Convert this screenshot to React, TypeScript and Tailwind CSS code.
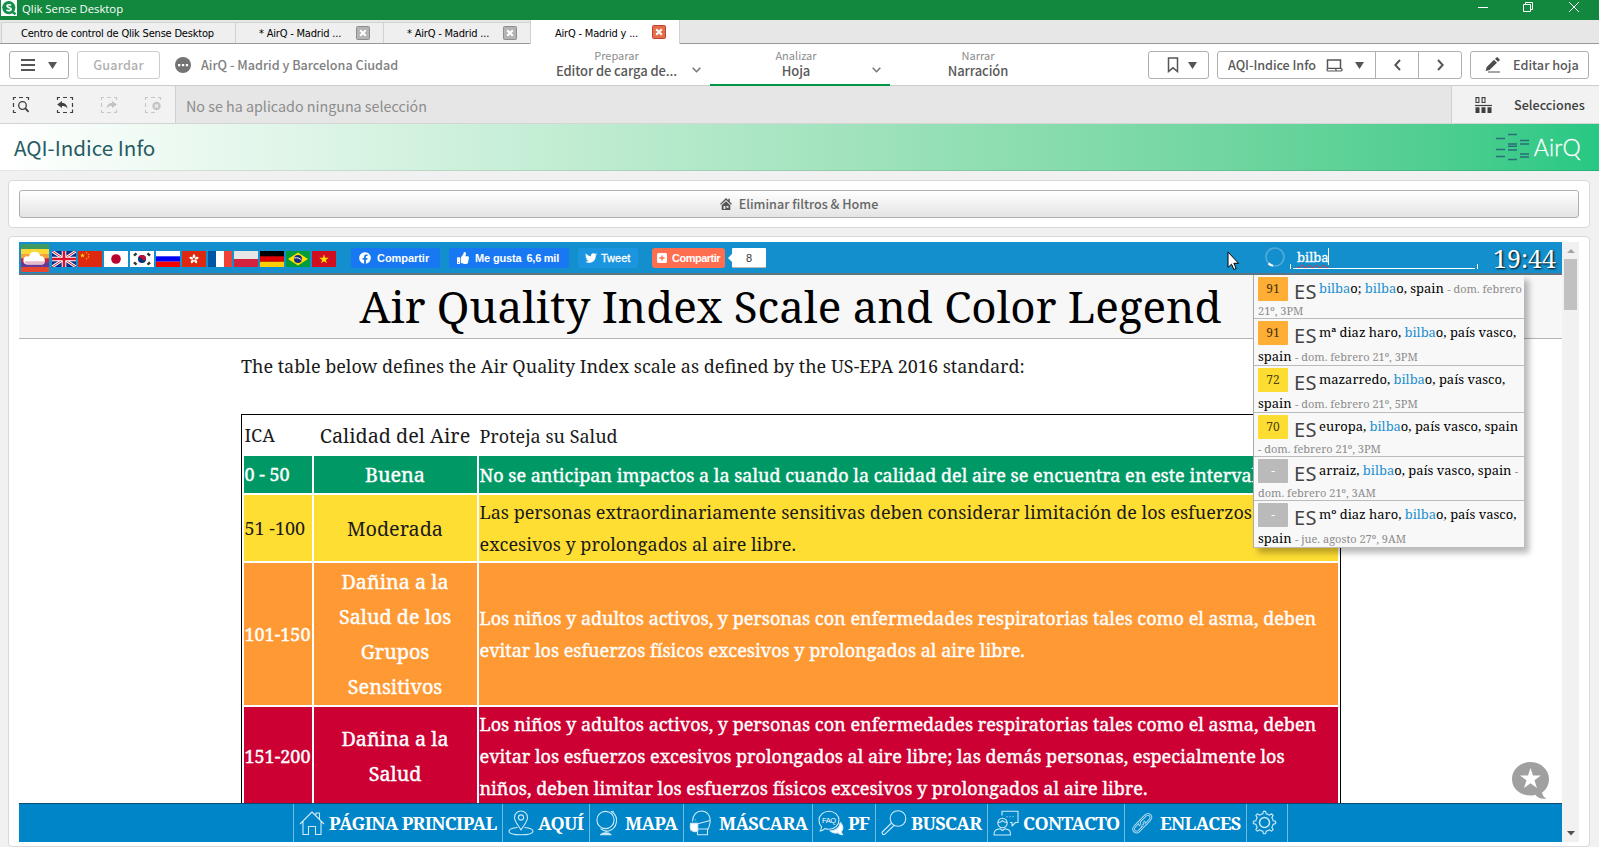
import React from "react";
import { FaFacebook, FaThumbsUp, FaTwitter } from "react-icons/fa";

const SANS = "font-['Noto_Sans_CJK_SC','Noto_Sans',sans-serif]";
const SERIF = "font-['Noto_Serif','DejaVu_Serif',serif]";
const UI = "font-['DejaVu_Sans_Condensed','Noto_Sans',sans-serif]";

/* ---------- window chrome ---------- */

function TitleBar() {
  return (
    <div className="flex h-[20px] items-start bg-[#11883e] pl-[1px]">
      <svg width="16" height="16" viewBox="0 0 16 16" className="shrink-0">
        <rect width="16" height="16" fill="#fff" />
        <circle cx="7.8" cy="7.6" r="6.6" fill="#12904a" />
        <path d="M11 11.5l3.5 2.8" stroke="#12904a" strokeWidth="2.4" />
        <path d="M10 5.4C9.3 4.6 6 4.3 6 6.1c0 1.9 4.1 1 4.1 3 0 2-3.600 1.800-4.500.600" fill="none" stroke="#fff" strokeWidth="1.700" />
      </svg>
      <span className="ml-[5px] font-['Open_Sans','Noto_Sans',sans-serif] text-[11.300px] leading-[18px] text-white">Qlik Sense Desktop</span>
      <svg width="112" height="14" viewBox="0 0 112 14" className="ml-auto mr-[10px]" fill="none" stroke="#fff" strokeWidth="1">
        <path d="M1 7.500h10" />
        <path d="M46.500 4.500h7v7h-7zM48.500 4.500v-2h7v7h-2" />
        <path d="M92 2l10 10M102 2l-10 10" />
      </svg>
    </div>
  );
}

function CloseBox({ active }: { active?: boolean }) {
  return (
    <svg width="14" height="14" viewBox="0 0 14 14" className={`absolute right-[13px] ${active ? "top-[5px]" : "top-[3px]"}`}>
      <rect x=".500" y=".500" width="13" height="13" rx="1" fill={active ? "#e0704e" : "#b4b4b4"} stroke={active ? "#c9402a" : "#8e8e8e"} />
      <path d="M4.200 4.200l5.600 5.600M9.800 4.200l-5.600 5.600" stroke="#fff" strokeWidth="2" />
    </svg>
  );
}

function WindowTabs() {
  return (
    <div className={`${UI} flex h-[24px] items-end border-b border-[#999] bg-[#e7e7e7] pl-[1px] text-[11px] tracking-[-0.200px] text-black`}>
      <div className="h-[21px] w-[234px] border-l border-t border-[#d2d2d2] bg-[#efefef] pl-[19px] leading-[22px]">Centro de control de Qlik Sense Desktop</div>
      <div className="relative h-[21px] w-[148px] border-l border-t border-[#d2d2d2] bg-[#efefef] pl-[23px] leading-[22px]">* AirQ - Madrid ...<CloseBox /></div>
      <div className="relative h-[21px] w-[147px] border-l border-t border-[#d2d2d2] bg-[#efefef] pl-[23px] leading-[22px]">* AirQ - Madrid ...<CloseBox /></div>
      <div className="relative -mb-px h-[24px] w-[150px] border-l border-r border-[#d2d2d2] bg-white pl-[24px] leading-[27px]">AirQ - Madrid y ...<CloseBox active /></div>
    </div>
  );
}

/* ---------- Qlik toolbar ---------- */

function Caret() {
  return <svg width="9" height="7" viewBox="0 0 9 7"><path d="M0 0h9L4.500 7z" fill="#555" /></svg>;
}

function Chevron() {
  return <svg width="9" height="6" viewBox="0 0 9 6" className="absolute right-[9px] top-[23px]" fill="none" stroke="#777" strokeWidth="1.600"><path d="M.700.700l3.800 4 3.800-4" /></svg>;
}

function NavTab({ top, label, pad, active, arrow }: { top: string; label: string; pad: string; active?: boolean; arrow?: boolean }) {
  return (
    <div className={`relative flex h-[42px] w-[180px] flex-col items-center ${pad} ${active ? "border-b-2 border-[#009845]" : ""}`}>
      <span className="mt-[3px] text-[11px] font-normal leading-[16px] text-[#8c8c8c]">{top}</span>
      <span className="text-[13px] font-medium leading-[16px] tracking-[-0.100px] text-[#595959]">{label}</span>
      {arrow && <Chevron />}
    </div>
  );
}

function Toolbar() {
  const btn = "flex h-[28px] items-center rounded-[3px] border border-[#b0b0b0] bg-white";
  return (
    <div className={`${SANS} flex h-[42px] items-start border-b border-[#ccc] bg-white text-[12.600px] font-medium text-[#595959]`}>
      <div className="flex w-[530px] shrink-0 items-center pl-[9px] pt-[7px]">
        <div className={`${btn} w-[60px] gap-[13px] pl-[11px]`}>
          <svg width="14" height="12" viewBox="0 0 14 12"><path d="M0 1h14M0 6h14M0 11h14" stroke="#555" strokeWidth="2" /></svg>
          <Caret />
        </div>
        <div className={`${btn} ml-[8px] w-[83px] justify-center border-[#ccc] tracking-[0.200px] text-[#b0b0b0]`}>Guardar</div>
        <svg width="16" height="16" viewBox="0 0 16 16" className="ml-[15px]"><circle cx="8" cy="8" r="8" fill="#737373" /><path d="M3 7h2.300v2.300H3zM6.900 7h2.300v2.300H6.900zM10.800 7h2.300v2.300h-2.300z" fill="#fff" /></svg>
        <span className="ml-[10px] text-[12.600px] text-[#808080]">AirQ - Madrid y Barcelona Ciudad</span>
      </div>
      <NavTab top="Preparar" label="Editor de carga de..." pad="pr-[7px]" arrow />
      <NavTab top="Analizar" label="Hoja" pad="pr-[8px]" active arrow />
      <NavTab top="Narrar" label="Narración" pad="pr-[4px]" />
      <div className="ml-auto flex pr-[10px] pt-[7px]">
        <div className={`${btn} w-[61px] gap-[9px] pl-[18px]`}>
          <svg width="12" height="16" viewBox="0 0 12 16" fill="none" stroke="#555" strokeWidth="1.500"><path d="M1.500 1h9v13.500L6 10.800l-4.500 3.700z" /></svg>
          <Caret />
        </div>
        <div className={`${btn} ml-[8px] w-[245px]`}>
          <span className="ml-[10px] w-[98px] whitespace-nowrap tracking-[-0.050px]">AQI-Indice Info</span>
          <svg width="17" height="13" viewBox="0 0 17 13" fill="none" stroke="#555" strokeWidth="1.500"><path d="M1.500 9.500V1h13v8" /><path d="M9.500 9.300H2.200c-1.600 0-1.600 2.700 0 2.700h12.300c2.200 0 2.200-2.700 0-2.700H9.500c0 1 .200 1.500 1 2.200" strokeWidth="1.200" /></svg>
          <span className="ml-[12px]"><Caret /></span>
          <span className="ml-[11px] flex h-[26px] w-[43px] items-center justify-center border-l border-[#b0b0b0]"><svg width="7" height="12" viewBox="0 0 7 12" fill="none" stroke="#555" strokeWidth="2"><path d="M6 1L1.300 6 6 11" /></svg></span>
          <span className="flex h-[26px] w-[43px] items-center justify-center border-l border-[#b0b0b0]"><svg width="7" height="12" viewBox="0 0 7 12" fill="none" stroke="#555" strokeWidth="2"><path d="M1 1l4.700 5L1 11" /></svg></span>
        </div>
        <div className={`${btn} ml-[8px] w-[119px] pl-[14px] text-[12.700px]`}>
          <svg width="16" height="16" viewBox="0 0 16 16" fill="#4d4d4d"><path d="M.500 14l1.200-4L9 2.700 12 5.700 4.500 13zM10 1.800L11.500.400q.600-.600 1.200 0l1.800 1.800q.600.600 0 1.200L13 4.800z" /><path d="M3 14.500h12v1H3z" /></svg>
          <span className="ml-[12px] whitespace-nowrap">Editar hoja</span>
        </div>
      </div>
    </div>
  );
}

function DashedIcon({ color, children }: { color: string; children: React.ReactNode }) {
  return (
    <svg width="18" height="18" viewBox="0 0 18 18" fill="none" stroke={color} strokeWidth="1.200">
      {children}
    </svg>
  );
}

function SelectionBar() {
  const left = "M1.500 4V1.500h2.500M7 1.500h4M1.500 7v4M1.500 14v2.500h2.500";
  const topRight = "M14 1.500h2.500V4";
  return (
    <div className={`${SANS} flex h-[38px] border-b border-[#d4d4d4] bg-[#e6e6e6]`}>
      <div className="flex w-[176px] shrink-0 items-center gap-[26px] border-r border-[#d0d0d0] bg-[#f2f2f2] pl-[12px]">
        <DashedIcon color="#404040"><path d={left} /><path d={topRight} /><circle cx="10.500" cy="9.500" r="3.800" strokeWidth="1.300" /><path d="M13.200 12.200l3.300 3.600" strokeWidth="1.800" /></DashedIcon>
        <DashedIcon color="#404040"><path d="M1.500 4V1.500h2.500M7 1.500h4M1.500 14v2.500h2.500M7 16.500h4" /><path d={topRight} /><path d="M1.200 8.500L6 5v2c4 0 5 2.500 5.500 5.500C10 10.500 8.500 10 6 10v2z" fill="#404040" stroke="none" /><path d="M16.500 7v4M16.500 13.500v3H14" /></DashedIcon>
        <DashedIcon color="#c8c8c8"><path d={left} /><path d={topRight} /><path d="M17 8.500L12 5v2c-4 0-5 2.500-5.500 5.500C8 10.500 9.500 10 12 10v2z" fill="#c4c4c4" stroke="none" /><path d="M7 16.500h4M16.500 14v2.500H14" /></DashedIcon>
        <DashedIcon color="#c8c8c8"><path d={left} /><path d={topRight} /><path d="M7 16.500h4" /><circle cx="12.500" cy="10" r="4.200" fill="#c4c4c4" stroke="none" /><path d="M10.900 8.400l3.200 3.200M14.100 8.400l-3.200 3.200" stroke="#f2f2f2" strokeWidth="1.300" /></DashedIcon>
      </div>
      <span className="pl-[10px] text-[14.300px] leading-[39px] text-[#8c8c8c]">No se ha aplicado ninguna selección</span>
      <div className="ml-auto flex w-[148px] items-center border-l border-[#d0d0d0] bg-[#f2f2f2] pl-[23px]">
        <svg width="17" height="16" viewBox="0 0 17 16" fill="none" stroke="#404040"><path d="M1 .600h2.900v4.900H1zM7.100.600H10v4.900H7.100z" strokeWidth="1.100" /><path d="M0 8.500h17" strokeWidth="1.200" /><path d="M.500 10.300h4V16h-4zM6.500 10.300h4V16h-4zM12.500 10.300h4V16h-4z" fill="#404040" stroke="none" /></svg>
        <span className="ml-[22px] text-[12.600px] font-medium leading-[39px] text-[#404040]">Selecciones</span>
      </div>
    </div>
  );
}

function SheetHeader() {
  return (
    <div className={`${SANS} flex h-[47px] items-center border-b border-black/10 bg-gradient-to-r from-white to-[#26c884] pl-[14px] pr-[18px]`}>
      <span className="text-[20.600px] leading-[44px] text-[#275b64]">AQI-Indice Info</span>
      <svg width="36" height="28" viewBox="0 0 36 28" className="ml-auto" stroke="#2a6e78" strokeWidth="1.600">
        <path d="M1 5.500h9M1 16.500h9M1 23.500h9M13 1.500h9M13 11h9M13 13.300h9M13 17h9M13 26.500h9M25 7.500h9M25 11h9M25 21h9M25 24h9" />
      </svg>
      <span className="ml-[3px] font-['Lato',sans-serif] text-[23px] font-light leading-[44px] tracking-[0.200px] text-white [-webkit-text-stroke:0.300px_white]">AirQ</span>
    </div>
  );
}

/* ---------- flags ---------- */

function Flag({ children }: { children: React.ReactNode }) {
  return <svg width="24" height="16" viewBox="0 0 24 16" className="shrink-0">{children}</svg>;
}

const STAR = "M0-1L.225-.309H.951L.363.118.588.809 0 .382-.588.809-.363.118-.951-.309H-.225Z";

function Flags() {
  return (
    <div className="flex gap-[2px] pt-[9px]">
      <Flag><rect width="24" height="16" fill="#0a2f8a" /><path d="M0 0l24 16M24 0L0 16" stroke="#fff" strokeWidth="2.800" /><path d="M0 0l24 16M24 0L0 16" stroke="#d8142c" strokeWidth="1" /><path d="M12 0v16M0 8h24" stroke="#fff" strokeWidth="4.600" /><path d="M12 0v16M0 8h24" stroke="#d8142c" strokeWidth="2.600" /></Flag>
      <Flag><rect width="24" height="16" fill="#de2910" /><path d={STAR} transform="translate(4.500 4.500) scale(2.600)" fill="#ffde00" /><g fill="#ffb000"><circle cx="8.500" cy="1.800" r=".8" /><circle cx="10.500" cy="3.500" r=".8" /><circle cx="10.500" cy="6" r=".8" /><circle cx="8.500" cy="7.800" r=".8" /></g></Flag>
      <Flag><rect width="24" height="16" fill="#fff" /><circle cx="12" cy="8" r="4.800" fill="#bc002d" /></Flag>
      <Flag><rect width="24" height="16" fill="#fff" /><circle cx="12" cy="8" r="4" fill="#003478" /><path d="M8.300 6.500A4 4 0 0 1 16 8c-1 2-3.500 1.500-4 0s-3-2-3.700-1.500z" fill="#c60c30" /><path d="M4 4.700l2.500-2.400M17.500 2.300L20 4.700M4 11.300l2.500 2.400M17.500 13.700l2.500-2.400" stroke="#333" strokeWidth="2.400" /></Flag>
      <Flag><rect width="24" height="16" fill="#fff" /><rect y="5.300" width="24" height="5.400" fill="#0000f5" /><rect y="10.700" width="24" height="5.300" fill="#f50000" /></Flag>
      <Flag><rect width="24" height="16" fill="#de2910" /><g fill="#fff" transform="translate(12 8)"><ellipse cy="-2.800" rx="1.300" ry="2" /><ellipse cy="-2.800" rx="1.300" ry="2" transform="rotate(72)" /><ellipse cy="-2.800" rx="1.300" ry="2" transform="rotate(144)" /><ellipse cy="-2.800" rx="1.300" ry="2" transform="rotate(216)" /><ellipse cy="-2.800" rx="1.300" ry="2" transform="rotate(288)" /></g></Flag>
      <Flag><rect width="24" height="16" fill="#fff" /><rect width="8" height="16" fill="#0055a4" /><rect x="16" width="8" height="16" fill="#ef4135" /></Flag>
      <Flag><rect width="24" height="16" fill="#e6e6e6" /><rect y="8" width="24" height="8" fill="#d4213d" /></Flag>
      <Flag><rect width="24" height="16" fill="#000" /><rect y="5.300" width="24" height="5.400" fill="#e00000" /><rect y="10.700" width="24" height="5.300" fill="#ffce00" /></Flag>
      <Flag><rect width="24" height="16" fill="#009b3a" /><path d="M12 1.500L22 8l-10 6.500L2 8z" fill="#fedf00" /><circle cx="12" cy="8" r="4" fill="#1b2a7a" /><path d="M8.200 7c3-.800 6 .300 7.500 2.300" stroke="#fff" fill="none" /></Flag>
      <Flag><rect width="24" height="16" fill="#d20f20" /><path d={STAR} transform="translate(12 8.300) scale(5)" fill="#ffdf00" /></Flag>
    </div>
  );
}

function SiteLogo() {
  return (
    <svg width="28" height="28" viewBox="0 0 28 28" className="mt-[2px] shrink-0">
      <rect width="28" height="28" fill="#e0432e" />
      <rect width="28" height="5" fill="#3f9a62" /><rect y="5" width="28" height="5" fill="#fbd737" /><rect y="10" width="28" height="4.500" fill="#f6a23a" /><rect y="14.500" width="28" height="4" fill="#c32544" /><rect y="18.500" width="28" height="4.500" fill="#653a96" /><rect y="23" width="28" height="5" fill="#e8452f" />
      <path d="M6.500 20.500a3.700 3.700 0 0 1 0-8.200q.800 0 1.600.200a5.800 5.800 0 0 1 11.300-.600 4.500 4.500 0 0 1 1.800 8.600z" fill="#fff" />
      <path d="M3.500 17.300h20.500q-.500 3.200-2.500 3.200H6q-2.500-.500-2.500-3.200z" fill="#e7b9cb" />
    </svg>
  );
}

/* ---------- site bar ---------- */

function SiteBar() {
  const share = "flex h-[20px] items-center rounded-[3px] font-['Liberation_Sans',Arial,sans-serif] text-[11px] font-bold text-white whitespace-nowrap";
  return (
    <div className="flex h-[33px] items-start border-b-2 border-[#5f7482] bg-[#138fcd] pl-[2px]">
      <SiteLogo />
      <div className="ml-[3px]"><Flags /></div>
      <div className={`${share} ml-[15px] mt-[6px] w-[89px] bg-[#1877f2] pl-[8px]`}><FaFacebook size={12} /><span className="ml-[6px] tracking-[-0.050px]">Compartir</span></div>
      <div className={`${share} ml-[9px] mt-[6px] w-[120px] bg-[#1877f2] pl-[8px]`}><FaThumbsUp size={12} /><span className="ml-[6px] tracking-[-0.150px]">Me gusta</span><span className="ml-[5px] tracking-[-0.250px]">6,6 mil</span></div>
      <div className={`${share} ml-[9px] mt-[6px] w-[60px] bg-[#1b95e0] pl-[7px]`}><FaTwitter size={12} /><span className="ml-[4px] font-normal [-webkit-text-stroke:0.300px_white]">Tweet</span></div>
      <div className={`${share} ml-[14px] mt-[6px] w-[73px] bg-[#ff6f4f] pl-[5px]`}>
        <svg width="10" height="10" viewBox="0 0 10 10"><rect width="10" height="10" rx="1.500" fill="#fff" /><path d="M5 2.500v5M2.500 5h5" stroke="#ff6f4f" strokeWidth="1.300" /></svg>
        <span className="ml-[5px] tracking-[-0.500px]">Compartir</span>
      </div>
      <svg width="4" height="8" viewBox="0 0 4 8" className="ml-[3px] mt-[12px]"><path d="M4 0v8L0 4z" fill="#fff" /></svg>
      <div className="mt-[6px] h-[19px] w-[34px] rounded-[1px] bg-white text-center font-['Liberation_Sans',Arial,sans-serif] text-[11px] leading-[20px] text-[#333] shadow-[0_1px_0_#bbb]">8</div>
      <svg width="20" height="20" viewBox="0 0 20 20" className="ml-[499px] mt-[5px]" fill="none"><circle cx="10" cy="10" r="9" stroke="#4fabd9" strokeWidth="1.700" /><path d="M3.600 16.400A9 9 0 0 0 8 18.800" stroke="#fff" strokeWidth="2.200" /></svg>
      <div className="ml-[5px] mt-[6px] flex h-[21px] w-[188px] items-end">
        <span className="h-[5px] w-px bg-white" />
        <div className={`${SERIF} mx-[2px] flex h-[22px] flex-1 items-center border-b border-white pb-[2px] pl-[4px] text-[13px] text-white`}>
          <span className="leading-[16px] underline decoration-[#e0303c] decoration-wavy decoration-[1px] underline-offset-[2px] [-webkit-text-stroke:0.300px_white]">bilba</span>
          <span className="-mt-[1px] h-[17px] w-px bg-white" />
        </div>
        <span className="h-[5px] w-px bg-white" />
      </div>
      <div className={`${SERIF} ml-auto mr-[6px] text-[25px] leading-[32px] text-white [text-shadow:1px_1px_2px_#000]`}>19:44</div>
    </div>
  );
}

/* ---------- search results ---------- */

const HIT = "text-[#1b8fd0]";
const GREY = "text-[11px] text-[#8c8c8c]";

function Result({ aqi, color, tall, first, second }: { aqi: string; color: string; tall?: boolean; first: React.ReactNode; second: React.ReactNode }) {
  return (
    <div className={`${tall ? "h-[47px]" : "h-[44px]"} border-b border-[#bbb] pl-[4px] text-black`}>
      <div className="flex h-[28px] whitespace-nowrap">
        <span className={`mt-[2px] h-[24px] w-[30px] shrink-0 rounded-[1px] text-center text-[12px] leading-[24px] ${color}`}>{aqi}</span>
        <span className="ml-[6px] w-[25px] shrink-0 pt-[6px] font-['Noto_Sans',sans-serif] text-[20px] leading-[22px] tracking-[0.300px] text-[#444]">ES</span>
        <span className="text-[12.950px] leading-[27px]">{first}</span>
      </div>
      <div className={`whitespace-nowrap text-[12.950px] ${tall ? "leading-[19px]" : "leading-[14px]"}`}>{second}</div>
    </div>
  );
}

function Results() {
  const orange = "bg-[#ffae35] text-[#4a3208]";
  const yellow = "bg-[#fedd33] text-[#4f440c]";
  const none = "bg-[#bababa] text-white";
  const b = <span className={HIT}>bilba</span>;
  return (
    <div className={`${SERIF} absolute left-[1234px] top-[33px] w-[271px] border-l border-[#aaa] bg-[#f8f8f8] shadow-[5px_5px_6px_rgba(0,0,0,0.28)]`}>
      <Result aqi="91" color={orange} first={<>{b}o; {b}o, spain <span className={GREY}>- dom. febrero</span></>} second={<span className={GREY}>21º, 3PM</span>} />
      <Result aqi="91" color={orange} tall first={<>mª diaz haro, {b}o, país vasco,</>} second={<>spain <span className={GREY}>- dom. febrero 21º, 3PM</span></>} />
      <Result aqi="72" color={yellow} tall first={<>mazarredo, {b}o, país vasco,</>} second={<>spain <span className={GREY}>- dom. febrero 21º, 5PM</span></>} />
      <Result aqi="70" color={yellow} first={<>europa, {b}o, país vasco, spain</>} second={<span className={GREY}>- dom. febrero 21º, 3PM</span>} />
      <Result aqi="-" color={none} first={<>arraiz, {b}o, país vasco, spain <span className={GREY}>-</span></>} second={<span className={GREY}>dom. febrero 21º, 3AM</span>} />
      <Result aqi="-" color={none} tall first={<>mº diaz haro, {b}o, país vasco,</>} second={<>spain <span className={GREY}>- jue. agosto 27º, 9AM</span></>} />
    </div>
  );
}

/* ---------- AQI table ---------- */

function AqiRow({ range, level, advice, cell, height }: { range: string; level: string; advice: React.ReactNode; cell: string; height: string }) {
  return (
    <div className={`grid shrink-0 grid-cols-[68px_163px_859px] gap-[2px] ${height}`}>
      <div className={`flex items-center whitespace-nowrap pl-[0.500px] ${cell}`}>{range}</div>
      <div className={`flex items-center justify-center text-center text-[19.800px] leading-[35px] ${cell}`}><div className="w-[130px] -ml-[1px] flex justify-center whitespace-normal"><span className={level.startsWith("Calidad") ? "whitespace-nowrap" : ""}>{level}</span></div></div>
      <div className={`flex items-center whitespace-nowrap pl-[0.500px] leading-[32px] ${cell}`}><div>{advice}</div></div>
    </div>
  );
}

function AqiTable() {
  const light = "text-white [-webkit-text-stroke:0.400px_white]";
  return (
    <div className="ml-[222px] mt-[75px] flex w-[1100px] flex-col gap-[2px] border border-black p-[2px] text-[18px] text-[#1a1a1a]">
      <AqiRow range="ICA" level="Calidad del Aire" advice="Proteja su Salud" cell="bg-white" height="h-[37px]" />
      <AqiRow range="0 - 50" level="Buena" advice="No se anticipan impactos a la salud cuando la calidad del aire se encuentra en este intervalo." cell={`bg-[#009966] ${light}`} height="h-[37px]" />
      <AqiRow range="51 -100" level="Moderada" advice={<>Las personas extraordinariamente sensitivas deben considerar limitación de los esfuerzos<br />excesivos y prolongados al aire libre.</>} cell="bg-[#ffde33]" height="h-[66px]" />
      <AqiRow range="101-150" level="Dañina a la Salud de los Grupos Sensitivos" advice={<>Los niños y adultos activos, y personas con enfermedades respiratorias tales como el asma, deben<br />evitar los esfuerzos físicos excesivos y prolongados al aire libre.</>} cell={`bg-[#ff9933] ${light}`} height="h-[142px]" />
      <AqiRow range="151-200" level="Dañina a la Salud" advice={<>Los niños y adultos activos, y personas con enfermedades respiratorias tales como el asma, deben<br />evitar los esfuerzos excesivos prolongados al aire libre; las demás personas, especialmente los<br />niños, deben limitar los esfuerzos físicos excesivos y prolongados al aire libre.</>} cell={`bg-[#cc0033] ${light}`} height="h-[98px]" />
    </div>
  );
}

/* ---------- footer menu ---------- */

function Icon({ children }: { children?: React.ReactNode }) {
  return <svg width="26" height="26" viewBox="0 0 26 26" className="shrink-0" fill="none" stroke="#cdeaf8" strokeWidth="1.100" strokeLinejoin="round">{children}</svg>;
}

const GEAR = Array.from({ length: 64 }, (_, i) => {
  const a = (i / 64) * Math.PI * 2;
  const r = Math.cos(a * 8) > 0.1 ? 11.2 : 8.8;
  return `${(12.5 + r * Math.cos(a)).toFixed(2)},${(12.5 + r * Math.sin(a)).toFixed(2)}`;
}).join(" ");

function FooterItem({ width, label, children }: { width: string; label?: string; children: React.ReactNode }) {
  return (
    <div className={`flex h-full items-center border-r border-[#6fbce3] pl-[5px] ${width}`}>
      <Icon>{children}</Icon>
      {label && <span className="ml-[4px] whitespace-nowrap tracking-[-0.660px]">{label}</span>}
    </div>
  );
}

function FooterMenu() {
  return (
    <div className={`${SERIF} absolute bottom-0 left-0 flex h-[39px] w-[1543px] border-t border-[#0a4a70] bg-[#0085c8] pl-[274px] text-[18px] font-bold text-white`}>
      <div className="flex border-l border-[#6fbce3]">
        <FooterItem width="w-[209px]" label="PÁGINA PRINCIPAL"><path d="M1 14L13 2l12 12M4 11.500V24.500h5.500v-8h7v8H22V11.500M17 5V3h3.500v6" /></FooterItem>
        <FooterItem width="w-[87px]" label="AQUÍ"><path d="M13 20c-3-5-6.500-8.500-6.500-12.500a6.500 6.500 0 0 1 13 0C19.500 11.500 16 15 13 20z" /><circle cx="13" cy="7.500" r="2.600" /><path d="M9.500 17.500C4.500 18 1 19.500 1 21.200c0 2.200 5.300 3.600 12 3.600s12-1.400 12-3.600c0-1.700-3.500-3.200-8.500-3.700" /></FooterItem>
        <FooterItem width="w-[94px]" label="MAPA"><circle cx="10.500" cy="10" r="8.600" /><path d="M16 1.200l1.500 1c6.500 5 5 16.500-4 18.800-3.500.600-6-.500-8-2.300M11 21v2.500M18.500 1l-1.500 2" /><path d="M5.500 24.800l2.800-1.800h5l2.800 1.800z" fill="#cdeaf8" /></FooterItem>
        <FooterItem width="w-[129px]" label="MÁSCARA"><path d="M3.500 11.500C3.500 5 7.500 1 12.500 1s9.500 4 8.500 12c-.500 3.500-1.500 5.500-2.500 6.500v5.200H8.500V21" /><path d="M2.500 13.200h6.300v7.300q-2.500 2-5.800.300c-2-.600-2-3-1.500-7.600z" fill="#fff" /><path d="M9 13.700L21 10.500M9 19h10.500M6.500 9.500v.800" /></FooterItem>
        <FooterItem width="w-[63px]" label="PF"><path d="M11 1.200c5.500 0 10 4 10 9s-4.500 9-10 9c-1.500 0-3-.300-4-.800-1.500 1.800-3 2.600-5 2.600 1-1.200 1.500-2.800 1.500-4.300C2 15 1 13 1 10.200c0-5 4.500-9 10-9z" /><path d="M22.300 12.500c3.400 3 3.200 6.700 1 8.800 0 1.300.600 2.500 1.500 3.500-2 0-3.600-.800-4.600-2-3 .700-6 .100-8.200-2 5.500 0 9.500-3 10.300-8.300z" fill="#fff" /><text x="4" y="13.200" fontSize="7.500" fontFamily="Liberation Sans" fontWeight="400" stroke="none" fill="#fff" textLength="14">FAQ</text></FooterItem>
        <FooterItem width="w-[112px]" label="BUSCAR"><circle cx="17" cy="8.500" r="7.800" /><path d="M10.500 13L1.300 22q-.700 1 .300 2t2 .300L13 15.500" /></FooterItem>
        <FooterItem width="w-[137px]" label="CONTACTO"><circle cx="9.500" cy="13" r="4.700" /><path d="M4.800 12.500c2.500.300 4-1 4.700-2 1.200 1.500 2.700 2 4.700 2M1 25c0-4.500 1.500-5.500 6-6.300l2.500 1.800 2.500-1.800c4.500.800 5.500 1.800 5.500 6.300zM9 5.500V1.200h16v11.300h-2.500L19 16v-3.500h-2" /><path d="M13.500 6.800h1M16.500 6.800h1M19.500 6.800h1" /></FooterItem>
        <FooterItem width="w-[122px]" label="ENLACES"><path d="M10.500 15.500c-1.500-1.500-1.500-3.500 0-5l5-5c3.300-3 7.300 1 4.300 4.300l-4.300 4.700c-1.300 1.300-2.800 1.500-4 .800M13.500 11.500c1.500 1.500 1.500 3.200.300 4.700L9 21c-3.300 3-7.500-1-4.300-4.300L9 12" stroke="#a9d9f0" strokeWidth="2.600" /><path d="M10.500 15.500c-1.500-1.500-1.500-3.500 0-5l5-5c3.300-3 7.300 1 4.300 4.300l-4.300 4.700c-1.300 1.300-2.800 1.500-4 .800M13.500 11.500c1.500 1.500 1.500 3.200.300 4.700L9 21c-3.300 3-7.500-1-4.300-4.300L9 12" stroke="#0085c8" strokeWidth=".900" /></FooterItem>
        <FooterItem width="w-[41px]"><polygon points={GEAR} /><circle cx="12.500" cy="12.500" r="5" strokeWidth="1.500" /></FooterItem>
      </div>
    </div>
  );
}

/* ---------- page ---------- */

function Scrollbar() {
  return (
    <div className="flex w-[17px] shrink-0 flex-col items-center justify-between bg-[#f1f1f1]">
      <div className="flex flex-col items-center">
        <svg width="8" height="17" viewBox="0 0 8 17"><path d="M0 11h8L4 7z" fill="#a3a3a3" /></svg>
        <div className="h-[51px] w-[13px] bg-[#c1c1c1]" />
      </div>
      <svg width="8" height="17" viewBox="0 0 8 17"><path d="M0 6h8l-4 4.500z" fill="#505050" /></svg>
    </div>
  );
}

export default function App() {
  return (
    <div className="flex h-[847px] w-[1599px] flex-col overflow-hidden bg-[#f1f1f1]">
      <TitleBar />
      <WindowTabs />
      <Toolbar />
      <SelectionBar />
      <SheetHeader />
      <div className="mx-[8px] mt-[9px] flex h-[48px] w-[1582px] shrink-0 items-center rounded-[4px] border border-[#d9d9d9] bg-white px-[10px]">
        <div className={`${SANS} flex h-[28px] flex-1 items-center justify-center gap-[7px] rounded-[3px] border border-[#b0b0b0] bg-gradient-to-b from-white to-[#e4e4e4] text-[12.600px] font-medium text-[#666]`}>
          <svg width="12" height="12" viewBox="0 0 12 12" fill="#555"><path d="M6 0L0 6l1 .800 5-4.800 5 4.800 1-.800-2.200-2.200V.800H8.300v1.500z" /><path d="M6 3.200L1.700 7.300V12h8.600V7.300zM3.600 8h1.700v3H3.600zM6.500 8h2v1.700h-2z" fillRule="evenodd" /></svg>
          <span>Eliminar filtros &amp; Home</span>
        </div>
      </div>
      <div className="mx-[8px] mt-[8px] h-[611px] w-[1582px] shrink-0 rounded-[4px] border border-[#d9d9d9] bg-white pl-[10px] pt-[5px]">
        <div className="flex h-[600px] w-[1560px]">
          <div className={`${SERIF} relative h-[600px] w-[1543px] overflow-hidden bg-white`}>
            <SiteBar />
            <h1 className="h-[64px] border-b border-[#b4b4b4] bg-[#f7f7f7] text-center text-[44px] leading-[62px] text-black">Air Quality Index Scale and Color Legend</h1>
            <p className="-mb-[43px] ml-[222px] mt-[12px] h-[31px] text-[18px] leading-[30px] text-[#1a1a1a]">The table below defines the Air Quality Index scale as defined by the US-EPA 2016 standard:</p>
            <AqiTable />
            <Results />
            <svg width="38" height="38" viewBox="0 0 38 38" className="absolute left-[1493px] top-[519px]">
              <path d="M18.500 1C28.500 1 37 8.500 37 18c0 6-3 11-7 13.500.500 3 2 5 4.500 6-4.500.800-9-.500-11-3.700-1.500.700-3 .700-5 .700C8 34.500 0 27.500 0 18S8 1 18.500 1z" fill="#a0a0a0" />
              <path d={STAR} transform="translate(18.500 18) scale(11)" fill="#fff" />
            </svg>
            <FooterMenu />
            <svg width="13" height="20" viewBox="0 0 13 20" className="absolute left-[1208px] top-[9px]"><path d="M1 1v15.500l3.500-3.300 2.400 5.300 2.300-1-2.300-5.200h4.700z" fill="#fff" stroke="#000" /></svg>
          </div>
          <Scrollbar />
        </div>
      </div>
    </div>
  );
}
